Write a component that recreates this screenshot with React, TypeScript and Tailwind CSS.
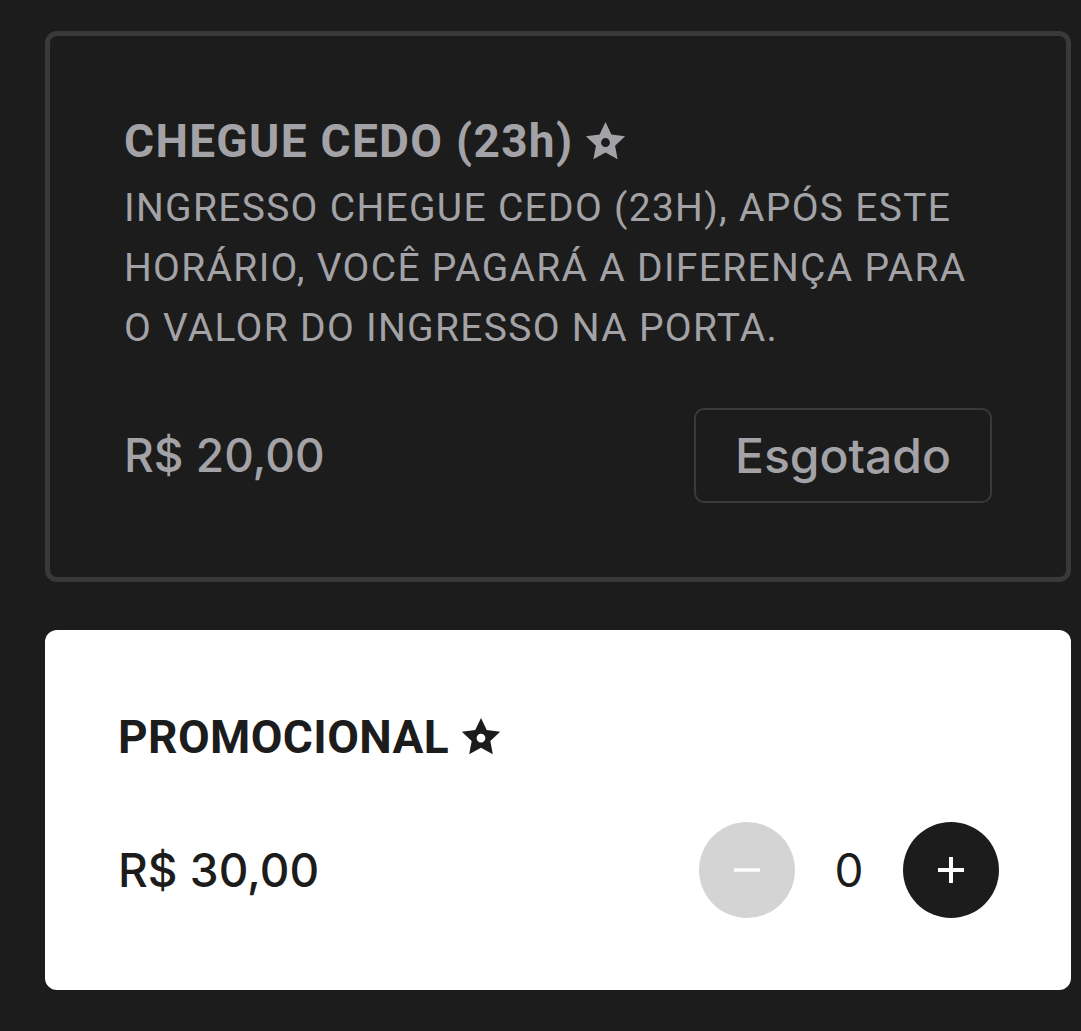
const upper = { fontFamily: "Roboto, 'Liberation Sans', sans-serif" }
const grotesk = { fontFamily: "Inter, 'Noto Sans', sans-serif" }

function Star({ className }: { className?: string }) {
  return (
    <svg viewBox="0 0 24 24" className={className} fill="currentColor" aria-hidden>
      <path
        fillRule="evenodd"
        d="M12 1.1 L15.29 8.07 L22.94 9.05 L17.33 14.33 L18.76 21.9 L12 18.2 L5.24 21.9 L6.67 14.33 L1.06 9.05 L8.71 8.07 Z M9.5 12.6 a2.5 2.5 0 1 0 5 0 a2.5 2.5 0 1 0 -5 0 Z"
      />
    </svg>
  )
}

export default function App() {
  return (
    <div className="min-h-[1031px] w-full bg-[#1c1c1c] pt-[31px] pb-[41px]">
      <div className="ml-[45px] flex w-[1026px] flex-col gap-[48px]">
        {/* Sold out ticket */}
        <div className="rounded-[12px] border-[5px] border-[#393939] px-[74px] pt-[77px] pb-[74px] text-[#a3a3a7]">
          <div className="flex items-center gap-[11px] text-[46px] leading-[56px] font-bold tracking-[1.3px]" style={upper}>
            <span>CHEGUE CEDO (23h)</span>
            <Star className="h-[43px] w-[43px]" />
          </div>
          <p className="mt-[9px] text-[39px] leading-[60px] tracking-[1.3px]" style={upper}>
            INGRESSO CHEGUE CEDO (23H), APÓS ESTE HORÁRIO, VOCÊ PAGARÁ A DIFERENÇA PARA O VALOR DO INGRESSO NA PORTA.
          </p>
          <div className="mt-[50px] flex items-center justify-between">
            <span className="text-[46px] font-medium" style={grotesk}>
              R$ 20,00
            </span>
            <button
              className="flex h-[95px] w-[298px] items-center justify-center rounded-[10px] border-2 border-[#3a3a3a] text-[48px] font-medium"
              style={grotesk}
            >
              Esgotado
            </button>
          </div>
        </div>

        {/* Promotional ticket */}
        <div className="rounded-[12px] bg-white pr-[72px] pl-[73px] pt-[79px] pb-[72px] text-[#1c1c1c]">
          <div className="flex items-center gap-[11px] text-[46px] leading-[56px] font-bold tracking-[0.4px]" style={upper}>
            <span>PROMOCIONAL</span>
            <Star className="h-[42px] w-[42px]" />
          </div>
          <div className="mt-[57px] flex items-center justify-between">
            <span className="text-[46px] font-medium" style={grotesk}>
              R$ 30,00
            </span>
            <div className="flex items-center">
              <button className="flex h-[96px] w-[96px] items-center justify-center rounded-full bg-[#d4d4d4]">
                <svg viewBox="0 0 26 26" className="h-[26px] w-[26px]" stroke="white" strokeWidth="3.5">
                  <line x1="0" y1="13" x2="26" y2="13" />
                </svg>
              </button>
              <span className="w-[108px] text-center text-[46px]" style={grotesk}>
                0
              </span>
              <button className="flex h-[96px] w-[96px] items-center justify-center rounded-full bg-[#1c1c1c]">
                <svg viewBox="0 0 26 26" className="h-[26px] w-[26px]" stroke="white" strokeWidth="4">
                  <line x1="0" y1="13" x2="26" y2="13" />
                  <line x1="13" y1="0" x2="13" y2="26" />
                </svg>
              </button>
            </div>
          </div>
        </div>
      </div>
    </div>
  )
}
